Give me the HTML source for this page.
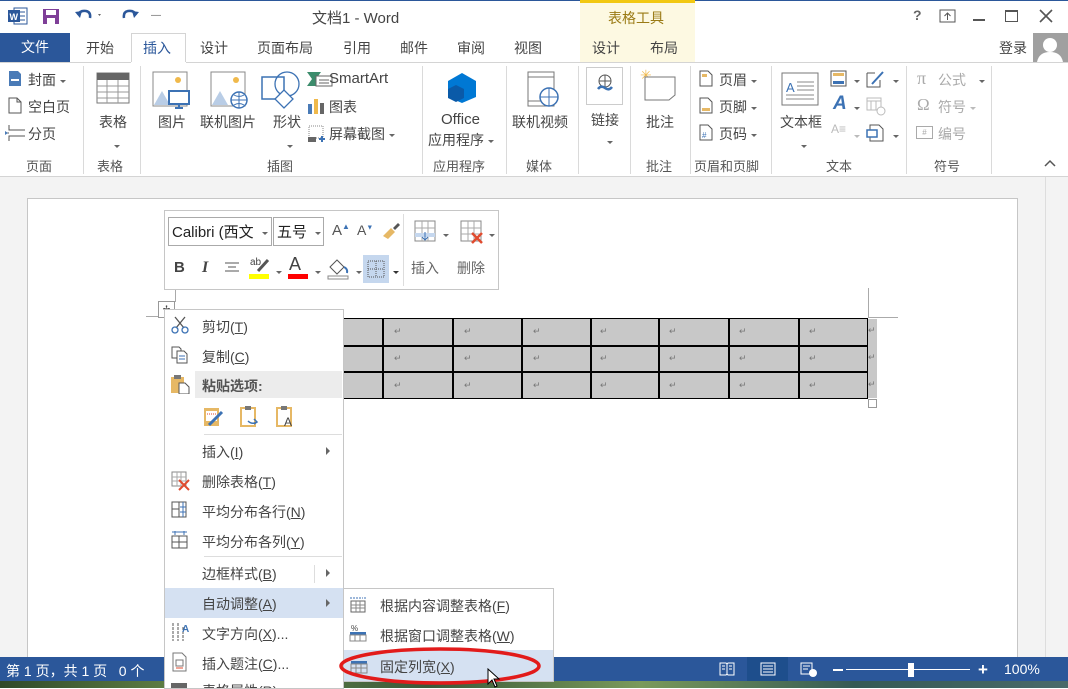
<!DOCTYPE html>
<html><head><meta charset="utf-8"><style>
*{margin:0;padding:0;box-sizing:border-box}
body{width:1068px;height:688px;overflow:hidden;position:relative;background:#fff;font-family:"Liberation Sans","Noto Sans CJK SC",sans-serif;font-size:14px;color:#444}
.a{position:absolute;white-space:nowrap}
.t{font-size:14px;color:#444}
.gl{font-size:13px;color:#555}
.sep{position:absolute;top:66px;width:1px;height:108px;background:#dadada}
.dd{display:inline-block;width:0;height:0;border-left:3px solid transparent;border-right:3px solid transparent;border-top:3px solid #666;vertical-align:middle;margin-left:4px}
.mi{position:absolute;left:202px;font-size:14px;color:#444}
.arr{position:absolute;width:0;height:0;border-top:4px solid transparent;border-bottom:4px solid transparent;border-left:4px solid #666}
.rt{position:absolute;font-size:9px;color:#777}
</style></head><body>
<div class="a" style="left:0;top:0;width:1068px;height:1px;background:#2b579a"></div>
<svg class="a" style="left:8px;top:7px" width="20" height="18"><rect x="6" y="1" width="13" height="16" fill="#fff" stroke="#2b579a"/><line x1="9" y1="5" x2="17" y2="5" stroke="#2b579a"/><line x1="9" y1="9" x2="17" y2="9" stroke="#2b579a"/><line x1="9" y1="13" x2="17" y2="13" stroke="#2b579a"/><rect x="0" y="3" width="12" height="12" fill="#2b579a"/><text x="1.5" y="13" font-size="9" fill="#fff" font-weight="bold" font-family="Liberation Sans">W</text></svg>
<svg class="a" style="left:42px;top:8px" width="18" height="17"><rect x="1" y="1" width="16" height="15" fill="#7f3f98"/><rect x="4" y="2" width="10" height="5" fill="#fff"/><rect x="5" y="10" width="8" height="6" fill="#fff"/></svg>
<svg class="a" style="left:74px;top:8px" width="30" height="16"><path d="M4 7 Q6 2 12 3 Q17 4 16 10" fill="none" stroke="#2b579a" stroke-width="2.5"/><path d="M1 4 L6 10 L8 3Z" fill="#2b579a"/><path d="M24 6 l3 0 l-1.5 2z" fill="#666"/></svg>
<svg class="a" style="left:118px;top:8px" width="22" height="16"><path d="M18 7 Q16 2 10 3 Q5 4 6 10" fill="none" stroke="#2b579a" stroke-width="2.5"/><path d="M21 4 L16 10 L14 3Z" fill="#2b579a"/></svg>
<div class="a" style="left:151px;top:10px;font-size:10px;color:#666">&#8213;</div>
<div class="a" style="left:312px;top:7px;font-size:15px;color:#444">文档1 - Word</div>
<div class="a" style="left:580px;top:0;width:115px;height:62px;background:#fdf9e2"></div>
<div class="a" style="left:580px;top:0;width:115px;height:3px;background:#f2c811"></div>
<div class="a" style="left:608px;top:8px;font-size:14px;color:#9a7a14">表格工具</div>
<div class="a" style="left:913px;top:7px;font-size:14px;color:#666;font-weight:bold">?</div>
<svg class="a" style="left:939px;top:9px" width="18" height="15"><rect x="1" y="1" width="15" height="12" fill="none" stroke="#555"/><path d="M8.5 11 V4 M5.5 7 L8.5 4 L11.5 7" stroke="#555" fill="none"/></svg>
<div class="a" style="left:973px;top:19px;width:12px;height:2px;background:#555"></div>
<div class="a" style="left:1005px;top:10px;width:13px;height:12px;border:1px solid #555;border-top-width:2px"></div>
<svg class="a" style="left:1039px;top:9px" width="14" height="14"><path d="M1 1 L13 13 M13 1 L1 13" stroke="#555" stroke-width="1.6"/></svg>
<div class="a" style="left:0;top:33px;width:70px;height:29px;background:#2b579a;color:#fff;font-size:14px;text-align:center;line-height:29px">文件</div>
<div class="a" style="left:131px;top:33px;width:55px;height:30px;background:#fff;border:1px solid #d4d4d4;border-bottom:none"></div>
<div class="a" style="left:0;top:62px;width:1068px;height:1px;background:#d4d4d4"></div>
<div class="a" style="left:131px;top:62px;width:55px;height:1px;background:#fff"></div>
<div class="a t" style="left:86px;top:38px">开始</div>
<div class="a t" style="left:143px;top:38px;color:#2b579a">插入</div>
<div class="a t" style="left:200px;top:38px">设计</div>
<div class="a t" style="left:257px;top:38px">页面布局</div>
<div class="a t" style="left:343px;top:38px">引用</div>
<div class="a t" style="left:400px;top:38px">邮件</div>
<div class="a t" style="left:457px;top:38px">审阅</div>
<div class="a t" style="left:514px;top:38px">视图</div>
<div class="a t" style="left:592px;top:38px">设计</div>
<div class="a t" style="left:650px;top:38px">布局</div>
<div class="a t" style="left:999px;top:38px">登录</div>
<div class="a" style="left:1033px;top:33px;width:35px;height:29px;background:#a0a0a0"></div>
<svg class="a" style="left:1033px;top:33px" width="35" height="29"><circle cx="17" cy="12" r="7" fill="#fff"/><path d="M4 29 Q6 19 17 19 Q28 19 30 29Z" fill="#fff"/></svg>
<div class="sep" style="left:83px"></div><div class="sep" style="left:140px"></div><div class="sep" style="left:422px"></div><div class="sep" style="left:506px"></div><div class="sep" style="left:578px"></div><div class="sep" style="left:630px"></div><div class="sep" style="left:690px"></div><div class="sep" style="left:771px"></div><div class="sep" style="left:906px"></div><div class="sep" style="left:991px"></div>
<div class="a" style="left:0;top:176px;width:1068px;height:1px;background:#d4d4d4"></div>
<svg class="a" style="left:8px;top:70px" width="14" height="17"><path d="M1 1 H10 L13 4 V16 H1Z" fill="#4a7bb7"/><rect x="3" y="9" width="8" height="2" fill="#fff"/></svg>
<div class="a t" style="left:28px;top:70px">封面<span class="dd"></span></div>
<svg class="a" style="left:8px;top:97px" width="14" height="17"><path d="M1 1 H9 L13 5 V16 H1Z M9 1 V5 H13" fill="#fff" stroke="#555"/></svg>
<div class="a t" style="left:28px;top:97px">空白页</div>
<svg class="a" style="left:5px;top:124px" width="22" height="18"><path d="M4 1 V6 H20 M4 17 V12 H20 M4 9 H1" stroke="#555" fill="none"/><path d="M0 7 L3 9 L0 11Z" fill="#4a7bb7"/></svg>
<div class="a t" style="left:28px;top:124px">分页</div>
<div class="a gl" style="left:26px;top:156px">页面</div>
<svg class="a" style="left:96px;top:72px" width="34" height="32"><rect x="1" y="1" width="32" height="30" fill="#fff" stroke="#777"/><rect x="1" y="1" width="32" height="7" fill="#666"/><path d="M1 14 H33 M1 20 H33 M1 26 H33 M11 8 V31 M22 8 V31" stroke="#999"/></svg>
<div class="a t" style="left:99px;top:112px">表格</div><div class="a" style="left:110px;top:137px"><span class="dd"></span></div>
<div class="a gl" style="left:97px;top:156px">表格</div>
<svg class="a" style="left:152px;top:71px" width="40" height="38"><rect x="1" y="1" width="34" height="34" fill="#fff" stroke="#888"/><circle cx="26" cy="9" r="3" fill="#f0b94b"/><path d="M2 34 L10 20 L18 34Z" fill="#b9cde6"/><rect x="17" y="20" width="20" height="13" fill="#fff" stroke="#3c72b4" stroke-width="2"/><path d="M27 33 V36 M23 37 H31" stroke="#3c72b4" stroke-width="2"/></svg>
<div class="a t" style="left:158px;top:112px">图片</div>
<svg class="a" style="left:210px;top:71px" width="40" height="38"><rect x="1" y="1" width="34" height="34" fill="#fff" stroke="#888"/><circle cx="26" cy="9" r="3" fill="#f0b94b"/><path d="M2 34 L10 20 L18 34Z" fill="#b9cde6"/><circle cx="29" cy="29" r="8" fill="#fff" stroke="#3c72b4" stroke-width="1.5"/><path d="M21 29 H37 M29 21 V37 M24 24 Q29 27 34 24 M24 34 Q29 31 34 34" stroke="#3c72b4" fill="none"/></svg>
<div class="a t" style="left:200px;top:112px">联机图片</div>
<svg class="a" style="left:260px;top:69px" width="40" height="40"><rect x="2" y="8" width="22" height="22" fill="#fff" stroke="#3c72b4" stroke-width="1.5"/><circle cx="27" cy="15" r="12" fill="none" stroke="#3c72b4" stroke-width="1.3"/><path d="M15 30 L24 21 L33 30 L24 39Z" fill="#fff" stroke="#3c72b4" stroke-width="1.3"/></svg>
<div class="a t" style="left:273px;top:112px">形状</div><div class="a" style="left:283px;top:137px"><span class="dd"></span></div>
<svg class="a" style="left:307px;top:71px" width="30" height="16"><path d="M0 1 H14 L9 8 L14 15 H0 L5 8Z" fill="#3c8c6c"/><rect x="9" y="5" width="16" height="10" fill="#fff" stroke="#666"/><path d="M12 9 H22 M12 12 H22" stroke="#666"/></svg>
<div class="a" style="left:329px;top:70px;font-size:15px;color:#444">SmartArt</div>
<svg class="a" style="left:307px;top:98px" width="20" height="17"><rect x="1" y="6" width="4" height="10" fill="#4a7bb7"/><rect x="7" y="1" width="4" height="15" fill="#f0b94b"/><rect x="13" y="5" width="4" height="11" fill="#666"/></svg>
<div class="a t" style="left:329px;top:97px">图表</div>
<svg class="a" style="left:307px;top:125px" width="20" height="18"><rect x="2" y="1" width="14" height="12" fill="none" stroke="#888" stroke-dasharray="1 1"/><rect x="1" y="12" width="8" height="5" fill="#666"/><path d="M12 14 H18 M15 11 V17" stroke="#3c72b4" stroke-width="2"/></svg>
<div class="a t" style="left:329px;top:124px">屏幕截图<span class="dd"></span></div>
<div class="a gl" style="left:267px;top:156px">插图</div>
<svg class="a" style="left:446px;top:72px" width="32" height="32"><path d="M16 1 L30 9 V25 L16 31 L2 25 V9Z" fill="#0078d4"/><path d="M2 17 L10 13 L18 17 V26 L10 30 L2 26Z" fill="#0a5aa8"/></svg>
<div class="a" style="left:441px;top:111px;font-size:15px;color:#444">Office</div>
<div class="a t" style="left:428px;top:130px">应用程序<span class="dd"></span></div>
<div class="a gl" style="left:433px;top:156px">应用程序</div>
<svg class="a" style="left:525px;top:71px" width="40" height="38"><rect x="3" y="1" width="26" height="34" fill="#fff" stroke="#777"/><path d="M3 6 H29 M3 30 H29" stroke="#777"/><circle cx="24" cy="26" r="9" fill="#fff" stroke="#3c72b4" stroke-width="1.5"/><path d="M15 26 H33 M24 17 V35" stroke="#3c72b4"/></svg>
<div class="a t" style="left:512px;top:112px">联机视频</div>
<div class="a gl" style="left:526px;top:156px">媒体</div>
<div class="a" style="left:586px;top:67px;width:37px;height:38px;border:1px solid #ccc"></div>
<svg class="a" style="left:595px;top:74px" width="20" height="20"><circle cx="10" cy="7" r="6" fill="none" stroke="#555"/><path d="M4 7 H16 M10 1 V13" stroke="#555"/><path d="M3 15 Q6 11 10 14 Q14 17 17 13" stroke="#3c72b4" stroke-width="2.5" fill="none"/></svg>
<div class="a t" style="left:591px;top:110px">链接</div><div class="a" style="left:603px;top:133px"><span class="dd"></span></div>
<svg class="a" style="left:640px;top:67px" width="38" height="34"><text x="0" y="13" font-size="14" fill="#f0b94b" font-family="DejaVu Sans">✳</text><path d="M5 10 H35 V28 L29 33 H5Z" fill="#fff" stroke="#777"/></svg>
<div class="a t" style="left:646px;top:112px">批注</div>
<div class="a gl" style="left:646px;top:156px">批注</div>
<svg class="a" style="left:699px;top:70px" width="14" height="17"><path d="M1 1 H9 L13 5 V16 H1Z" fill="#fff" stroke="#555"/><rect x="3" y="4" width="5" height="3" fill="#e6b865"/></svg>
<div class="a t" style="left:719px;top:70px">页眉<span class="dd"></span></div>
<svg class="a" style="left:699px;top:97px" width="14" height="17"><path d="M1 1 H9 L13 5 V16 H1Z" fill="#fff" stroke="#555"/><rect x="3" y="11" width="8" height="3" fill="#e6b865"/></svg>
<div class="a t" style="left:719px;top:97px">页脚<span class="dd"></span></div>
<svg class="a" style="left:699px;top:124px" width="14" height="17"><path d="M1 1 H9 L13 5 V16 H1Z" fill="#fff" stroke="#555"/><text x="3" y="14" font-size="8" fill="#3c72b4">#</text></svg>
<div class="a t" style="left:719px;top:124px">页码<span class="dd"></span></div>
<div class="a gl" style="left:694px;top:156px">页眉和页脚</div>
<svg class="a" style="left:781px;top:72px" width="38" height="34"><rect x="1" y="1" width="36" height="32" fill="#fff" stroke="#777"/><text x="5" y="20" font-size="13" fill="#3c72b4" font-family="Liberation Sans">A</text><path d="M16 10 H33 M16 14 H33 M16 18 H33 M5 23 H33 M5 27 H33" stroke="#888"/></svg>
<div class="a t" style="left:780px;top:112px">文本框</div><div class="a" style="left:797px;top:137px"><span class="dd"></span></div>
<svg class="a" style="left:830px;top:70px" width="18" height="17"><rect x="1" y="1" width="15" height="15" fill="#fff" stroke="#555"/><rect x="3" y="3" width="11" height="3" fill="#e6b865"/><rect x="3" y="11" width="11" height="3" fill="#3c72b4"/></svg><div class="a" style="left:850px;top:72px"><span class="dd"></span></div>
<div class="a" style="left:833px;top:93px;font-size:19px;color:#3c72b4;font-style:italic;font-weight:bold">A</div><div class="a" style="left:850px;top:99px"><span class="dd"></span></div>
<div class="a" style="left:831px;top:122px;font-size:12px;color:#bbb">A≡</div><div class="a" style="left:850px;top:127px"><span class="dd" style="border-top-color:#bbb"></span></div>
<svg class="a" style="left:866px;top:70px" width="20" height="18"><path d="M1 3 H9 M1 3 V17 H14 V10" fill="none" stroke="#555"/><path d="M6 14 L17 2" stroke="#3c72b4" stroke-width="2"/></svg><div class="a" style="left:889px;top:72px"><span class="dd"></span></div>
<svg class="a" style="left:866px;top:96px" width="20" height="20"><rect x="1" y="2" width="14" height="12" fill="none" stroke="#bbb"/><path d="M1 5 H15 M5 5 V14 M10 5 V14" stroke="#bbb"/><circle cx="15" cy="15" r="4" fill="#fff" stroke="#bbb"/></svg>
<svg class="a" style="left:866px;top:124px" width="20" height="18"><path d="M4 1 H13 L17 5 V17 H4Z" fill="#fff" stroke="#555"/><rect x="1" y="6" width="10" height="7" fill="#fff" stroke="#3c72b4" stroke-width="1.5"/></svg><div class="a" style="left:889px;top:127px"><span class="dd"></span></div>
<div class="a gl" style="left:826px;top:156px">文本</div>
<div class="a" style="left:917px;top:68px;font-size:18px;color:#aaa;font-family:'Liberation Serif',serif">π</div><div class="a" style="left:938px;top:70px;font-size:14px;color:#aaa">公式</div><div class="a" style="left:975px;top:72px"><span class="dd"></span></div>
<div class="a" style="left:917px;top:95px;font-size:17px;color:#aaa;font-family:'Liberation Serif',serif">Ω</div><div class="a" style="left:938px;top:97px;font-size:14px;color:#aaa">符号<span class="dd" style="border-top-color:#bbb"></span></div>
<div class="a" style="left:916px;top:126px;width:17px;height:13px;border:1px solid #aaa;font-size:8px;color:#aaa;text-align:center;line-height:11px">#</div><div class="a" style="left:938px;top:124px;font-size:14px;color:#aaa">编号</div>
<div class="a gl" style="left:934px;top:156px">符号</div>
<svg class="a" style="left:1044px;top:159px" width="12" height="8"><path d="M1 7 L6 2 L11 7" stroke="#555" fill="none" stroke-width="1.5"/></svg>
<!-- document area -->
<div class="a" style="left:0;top:177px;width:1068px;height:480px;background:#f3f3f3"></div>
<div class="a" style="left:27px;top:198px;width:991px;height:460px;background:#fff;border:1px solid #c6c6c6;border-bottom:none"></div>
<div class="a" style="left:1045px;top:177px;width:1px;height:480px;background:#ddd"></div>
<!-- status bar (under menus) -->
<div class="a" style="left:0;top:657px;width:1068px;height:24px;background:#2b579a"></div>
<div class="a" style="left:0;top:681px;width:1068px;height:7px;background:linear-gradient(90deg,#2f4a2a,#6a8a4a 20%,#3a5a3a 40%,#7a9a5a 60%,#355a55 80%,#4a6a6a)"></div>
<div class="a" style="left:6px;top:661px;font-size:14px;color:#fff">第 1 页，共 1 页&nbsp;&nbsp;&nbsp;0 个</div>
<svg class="a" style="left:719px;top:662px" width="16" height="14"><path d="M1 1 H7 L8 2 L9 1 H15 V13 H9 L8 12 L7 13 H1Z" fill="none" stroke="#fff"/><path d="M8 2 V12 M3 4 H6 M3 7 H6 M10 4 H13 M10 7 H13" stroke="#fff"/></svg>
<div class="a" style="left:747px;top:657px;width:41px;height:24px;background:#1e4e8c"></div>
<svg class="a" style="left:760px;top:662px" width="16" height="14"><rect x="1" y="1" width="14" height="12" fill="none" stroke="#fff"/><path d="M3 4 H13 M3 7 H13 M3 10 H13" stroke="#fff"/></svg>
<svg class="a" style="left:800px;top:662px" width="18" height="15"><rect x="1" y="1" width="11" height="11" fill="none" stroke="#fff"/><path d="M3 4 H10 M3 7 H8" stroke="#fff"/><circle cx="13" cy="11" r="4" fill="#fff"/></svg>
<div class="a" style="left:833px;top:669px;width:10px;height:2px;background:#fff"></div>
<div class="a" style="left:846px;top:669px;width:124px;height:1px;background:#fff"></div>
<div class="a" style="left:908px;top:663px;width:6px;height:14px;background:#fff"></div>
<div class="a" style="left:978px;top:664px;font-size:17px;color:#fff;line-height:12px;font-weight:bold">+</div>
<div class="a" style="left:1004px;top:661px;font-size:14px;color:#fff">100%</div>
<!-- crop marks -->
<div class="a" style="left:868px;top:288px;width:1px;height:30px;background:#aaa"></div>
<div class="a" style="left:868px;top:317px;width:30px;height:1px;background:#aaa"></div>
<div class="a" style="left:146px;top:316px;width:25px;height:1px;background:#aaa"></div>
<div class="a" style="left:175px;top:290px;width:1px;height:12px;background:#aaa"></div>
<div class="a" style="left:158px;top:301px;width:17px;height:17px;border:1px solid #999;background:#fff;font-size:9px;text-align:center;line-height:14px">✢</div>
<!-- table -->
<div class="a" style="left:170px;top:318px;width:698px;height:81px;background:#c8c8c8;border:1.5px solid #000"></div>
<div class="a" style="left:170px;top:345px;width:698px;height:1.5px;background:#000"></div>
<div class="a" style="left:170px;top:371px;width:698px;height:1.5px;background:#000"></div>
<div class="a" style="left:382px;top:318px;width:1.5px;height:81px;background:#000"></div>
<div class="a" style="left:452px;top:318px;width:1.5px;height:81px;background:#000"></div>
<div class="a" style="left:521px;top:318px;width:1.5px;height:81px;background:#000"></div>
<div class="a" style="left:590px;top:318px;width:1.5px;height:81px;background:#000"></div>
<div class="a" style="left:658px;top:318px;width:1.5px;height:81px;background:#000"></div>
<div class="a" style="left:728px;top:318px;width:1.5px;height:81px;background:#000"></div>
<div class="a" style="left:798px;top:318px;width:1.5px;height:81px;background:#000"></div>
<div class="a" style="left:868px;top:319px;width:9px;height:79px;background:#c8c8c8"></div>
<div class="a" style="left:868px;top:399px;width:9px;height:9px;border:1px solid #999;background:#fff"></div>
<div class="rt" style="left:394px;top:326px">↵</div><div class="rt" style="left:464px;top:326px">↵</div><div class="rt" style="left:533px;top:326px">↵</div><div class="rt" style="left:600px;top:326px">↵</div><div class="rt" style="left:669px;top:326px">↵</div><div class="rt" style="left:739px;top:326px">↵</div><div class="rt" style="left:809px;top:326px">↵</div><div class="rt" style="left:868px;top:325px">↵</div>
<div class="rt" style="left:394px;top:353px">↵</div><div class="rt" style="left:464px;top:353px">↵</div><div class="rt" style="left:533px;top:353px">↵</div><div class="rt" style="left:600px;top:353px">↵</div><div class="rt" style="left:669px;top:353px">↵</div><div class="rt" style="left:739px;top:353px">↵</div><div class="rt" style="left:809px;top:353px">↵</div><div class="rt" style="left:868px;top:352px">↵</div>
<div class="rt" style="left:394px;top:380px">↵</div><div class="rt" style="left:464px;top:380px">↵</div><div class="rt" style="left:533px;top:380px">↵</div><div class="rt" style="left:600px;top:380px">↵</div><div class="rt" style="left:669px;top:380px">↵</div><div class="rt" style="left:739px;top:380px">↵</div><div class="rt" style="left:809px;top:380px">↵</div><div class="rt" style="left:868px;top:379px">↵</div>
<!-- mini toolbar -->
<div class="a" style="left:164px;top:210px;width:335px;height:80px;background:#fff;border:1px solid #c6c6c6"></div>
<div class="a" style="left:168px;top:217px;width:104px;height:29px;border:1px solid #aaa;font-size:15px;color:#222;padding:3px 0 0 3px">Calibri (西文 <span class="dd"></span></div>
<div class="a" style="left:273px;top:217px;width:51px;height:29px;border:1px solid #aaa;font-size:15px;color:#222;padding:3px 0 0 3px">五号 <span class="dd"></span></div>
<div class="a" style="left:332px;top:222px;font-size:15px;color:#555">A<sup style="font-size:8px;color:#3c72b4">▲</sup></div>
<div class="a" style="left:357px;top:222px;font-size:14px;color:#555">A<sup style="font-size:7px;color:#3c72b4">▼</sup></div>
<svg class="a" style="left:381px;top:222px" width="20" height="18"><path d="M2 14 L10 6 L14 10 L7 17Z" fill="#e6b865"/><path d="M12 6 L17 1 L19 3 L14 8Z" fill="#555"/></svg>
<div class="a" style="left:403px;top:214px;width:1px;height:72px;background:#ddd"></div>
<svg class="a" style="left:414px;top:220px" width="24" height="22"><rect x="1" y="1" width="20" height="20" fill="#fff" stroke="#888"/><path d="M1 8 H21 M1 14 H21 M8 1 V21 M14 1 V21" stroke="#aaa"/><rect x="1" y="13" width="20" height="4" fill="#c5d7ee"/><path d="M11 12 V20 M8 17 L11 20 L14 17" stroke="#3c72b4" fill="none"/></svg><div class="a" style="left:439px;top:226px"><span class="dd"></span></div>
<svg class="a" style="left:460px;top:220px" width="26" height="24"><rect x="1" y="1" width="20" height="20" fill="#fff" stroke="#888"/><path d="M1 8 H21 M1 14 H21 M8 1 V21 M14 1 V21" stroke="#aaa"/><path d="M12 13 L22 23 M22 13 L12 23" stroke="#e04b2f" stroke-width="2.5"/></svg><div class="a" style="left:485px;top:226px"><span class="dd"></span></div>
<div class="a" style="left:174px;top:259px;font-size:15px;font-weight:bold;color:#444">B</div>
<div class="a" style="left:202px;top:259px;font-size:16px;font-style:italic;font-family:'Liberation Serif',serif;color:#444;font-weight:bold">I</div>
<svg class="a" style="left:224px;top:262px" width="16" height="12"><path d="M1 1 H15 M4 5 H12 M1 9 H15" stroke="#555"/></svg>
<div class="a" style="left:250px;top:257px;font-size:10px;color:#444">ab</div>
<svg class="a" style="left:254px;top:258px" width="16" height="14"><path d="M4 13 L14 2" stroke="#555" stroke-width="3"/></svg>
<div class="a" style="left:249px;top:274px;width:20px;height:5px;background:#ff0"></div><div class="a" style="left:272px;top:263px"><span class="dd"></span></div>
<div class="a" style="left:289px;top:254px;font-size:18px;color:#444">A</div>
<div class="a" style="left:288px;top:274px;width:20px;height:5px;background:#f00"></div><div class="a" style="left:311px;top:263px"><span class="dd"></span></div>
<svg class="a" style="left:327px;top:256px" width="24" height="24"><path d="M3 11 L10 4 L17 11 L10 18Z" fill="#fff" stroke="#555"/><path d="M17 11 Q21 13 20 17" stroke="#3c72b4" stroke-width="2" fill="none"/><rect x="1" y="20" width="20" height="3" fill="#fff" stroke="#888"/></svg><div class="a" style="left:352px;top:263px"><span class="dd"></span></div>
<div class="a" style="left:363px;top:255px;width:26px;height:28px;background:#c5d7ee"></div>
<svg class="a" style="left:367px;top:260px" width="18" height="18"><rect x="1" y="1" width="16" height="16" fill="none" stroke="#555" stroke-dasharray="1 1"/><path d="M9 1 V17 M1 9 H17" stroke="#555" stroke-dasharray="1 1"/></svg>
<div class="a" style="left:389px;top:263px"><span class="dd" style="border-top-color:#333"></span></div>
<div class="a" style="left:411px;top:258px;font-size:14px;color:#666">插入</div>
<div class="a" style="left:457px;top:258px;font-size:14px;color:#666">删除</div>
<!-- context menu -->
<div class="a" style="left:164px;top:309px;width:180px;height:380px;background:#fff;border:1px solid #c6c6c6"></div>
<svg class="a" style="left:171px;top:316px" width="18" height="18"><path d="M4 1 L13 12 M14 1 L5 12" stroke="#555" stroke-width="1.3"/><circle cx="4" cy="14" r="3" fill="none" stroke="#3c72b4" stroke-width="1.3"/><circle cx="14" cy="14" r="3" fill="none" stroke="#3c72b4" stroke-width="1.3"/></svg>
<div class="mi" style="top:317px">剪切(<u>T</u>)</div>
<svg class="a" style="left:171px;top:346px" width="18" height="18"><path d="M1 1 H8 L10 3 V12 H1Z" fill="#fff" stroke="#555"/><path d="M6 5 H13 L16 8 V17 H6Z" fill="#fff" stroke="#555"/><path d="M8 10 H14 M8 13 H14" stroke="#3c72b4"/></svg>
<div class="mi" style="top:347px">复制(<u>C</u>)</div>
<div class="a" style="left:195px;top:371px;width:147px;height:27px;background:#ececec"></div>
<svg class="a" style="left:170px;top:374px" width="20" height="20"><rect x="1" y="3" width="13" height="16" fill="#e6b865"/><rect x="4" y="1" width="7" height="4" fill="#777"/><path d="M9 9 H15 L19 13 V20 H9Z" fill="#fff" stroke="#555"/></svg>
<div class="mi" style="top:376px;font-weight:bold;color:#555">粘贴选项:</div>
<svg class="a" style="left:203px;top:405px" width="22" height="22"><rect x="1" y="3" width="15" height="18" fill="#e6b865"/><rect x="3" y="6" width="11" height="10" fill="#fff"/><path d="M4 9 H13" stroke="#e04b2f" stroke-dasharray="1 1"/><path d="M6 20 L19 7" stroke="#3c72b4" stroke-width="3"/></svg>
<svg class="a" style="left:240px;top:405px" width="22" height="22"><path d="M1 3 H15 V21 H1Z" fill="none" stroke="#e6b865" stroke-width="2"/><rect x="5" y="1" width="6" height="4" fill="#777"/><path d="M8 16 Q12 20 17 17 M14 14 L17 17 L14 19" stroke="#3c72b4" fill="none" stroke-width="1.5"/></svg>
<svg class="a" style="left:276px;top:405px" width="22" height="22"><path d="M1 3 H15 V21 H1Z" fill="none" stroke="#e6b865" stroke-width="2"/><rect x="5" y="1" width="6" height="4" fill="#777"/><text x="8" y="21" font-size="12" fill="#444" font-family="Liberation Sans">A</text></svg>
<div class="a" style="left:204px;top:434px;width:138px;height:1px;background:#ddd"></div>
<div class="mi" style="top:442px">插入(<u>I</u>)</div><div class="arr" style="left:326px;top:447px"></div>
<svg class="a" style="left:171px;top:471px" width="20" height="20"><rect x="1" y="1" width="14" height="14" fill="#fff" stroke="#888"/><path d="M1 6 H15 M1 10 H15 M6 1 V15 M10 1 V15" stroke="#aaa"/><path d="M8 9 L18 19 M18 9 L8 19" stroke="#e04b2f" stroke-width="2"/></svg>
<div class="mi" style="top:472px">删除表格(<u>T</u>)</div>
<svg class="a" style="left:171px;top:501px" width="18" height="18"><rect x="1" y="1" width="14" height="15" fill="none" stroke="#555"/><path d="M8 1 V16 M1 8 H8" stroke="#555"/><path d="M12 1 V16 M9 6 H15 M9 11 H15" stroke="#3c72b4"/></svg>
<div class="mi" style="top:502px">平均分布各行(<u>N</u>)</div>
<svg class="a" style="left:171px;top:531px" width="18" height="18"><rect x="1" y="5" width="15" height="12" fill="none" stroke="#555"/><path d="M1 11 H16 M8 5 V17" stroke="#555"/><path d="M1 1 H16 M4 0 V4 M13 0 V4" stroke="#3c72b4"/></svg>
<div class="mi" style="top:532px">平均分布各列(<u>Y</u>)</div>
<div class="a" style="left:204px;top:556px;width:138px;height:1px;background:#ddd"></div>
<div class="mi" style="top:564px">边框样式(<u>B</u>)</div><div class="a" style="left:314px;top:565px;width:1px;height:18px;background:#ddd"></div><div class="arr" style="left:326px;top:569px"></div>
<div class="a" style="left:165px;top:588px;width:178px;height:30px;background:#d5e1f2"></div>
<div class="mi" style="top:594px">自动调整(<u>A</u>)</div><div class="arr" style="left:326px;top:599px"></div>
<svg class="a" style="left:171px;top:622px" width="20" height="20"><path d="M2 1 V19 M7 1 V19 M12 5 V19" stroke="#555" stroke-dasharray="3 1"/><text x="11" y="10" font-size="10" fill="#3c72b4" font-family="Liberation Sans" font-weight="bold">A</text></svg>
<div class="mi" style="top:624px">文字方向(<u>X</u>)...</div>
<svg class="a" style="left:171px;top:652px" width="18" height="20"><path d="M2 1 H11 L15 5 V19 H2Z" fill="#fff" stroke="#777"/><rect x="5" y="8" width="7" height="6" fill="none" stroke="#777"/><path d="M5 16 H12" stroke="#e04b2f"/></svg>
<div class="mi" style="top:654px">插入题注(<u>C</u>)...</div>
<div class="a" style="left:171px;top:683px;width:16px;height:5px;background:#666"></div>
<div class="mi" style="top:681px;height:7px;overflow:hidden;font-size:14px;line-height:14px"><span style="position:relative;top:3px">表格属性(R)...</span></div>
<!-- submenu -->
<div class="a" style="left:343px;top:588px;width:211px;height:94px;background:#fff;border:1px solid #c6c6c6"></div>
<svg class="a" style="left:350px;top:595px" width="16" height="18"><path d="M1 2 V5 M15 2 V5 M3 3 H13" stroke="#3c72b4" stroke-dasharray="2 1"/><rect x="1" y="6" width="14" height="11" fill="none" stroke="#666"/><path d="M1 10 H15 M1 13 H15 M6 6 V17 M10 6 V17" stroke="#888"/></svg>
<div class="a t" style="left:380px;top:596px">根据内容调整表格(<u>F</u>)</div>
<svg class="a" style="left:349px;top:624px" width="18" height="18"><text x="2" y="7" font-size="8" fill="#444" font-family="Liberation Sans">%</text><rect x="1" y="8" width="16" height="3" fill="#3c72b4"/><rect x="1" y="11" width="16" height="6" fill="none" stroke="#888"/><path d="M6 11 V17 M11 11 V17" stroke="#888"/></svg>
<div class="a t" style="left:380px;top:626px">根据窗口调整表格(<u>W</u>)</div>
<div class="a" style="left:344px;top:650px;width:209px;height:31px;background:#d5e1f2"></div>
<svg class="a" style="left:350px;top:659px" width="18" height="16"><rect x="1" y="2" width="16" height="3" fill="#3c72b4"/><rect x="1" y="5" width="16" height="9" fill="none" stroke="#888"/><path d="M6 5 V14 M11 5 V14 M1 9 H17" stroke="#888"/></svg>
<div class="a t" style="left:380px;top:657px">固定列宽(<u>X</u>)</div>
<svg class="a" style="left:336px;top:642px" width="220" height="46"><ellipse cx="104" cy="24" rx="99" ry="17" fill="none" stroke="#e21b1b" stroke-width="3.5"/></svg>
<svg class="a" style="left:487px;top:668px" width="14" height="20"><path d="M1 1 V16 L5 12 L8 19 L10 18 L7 11 L12 11Z" fill="#fff" stroke="#000"/></svg>
</body></html>
